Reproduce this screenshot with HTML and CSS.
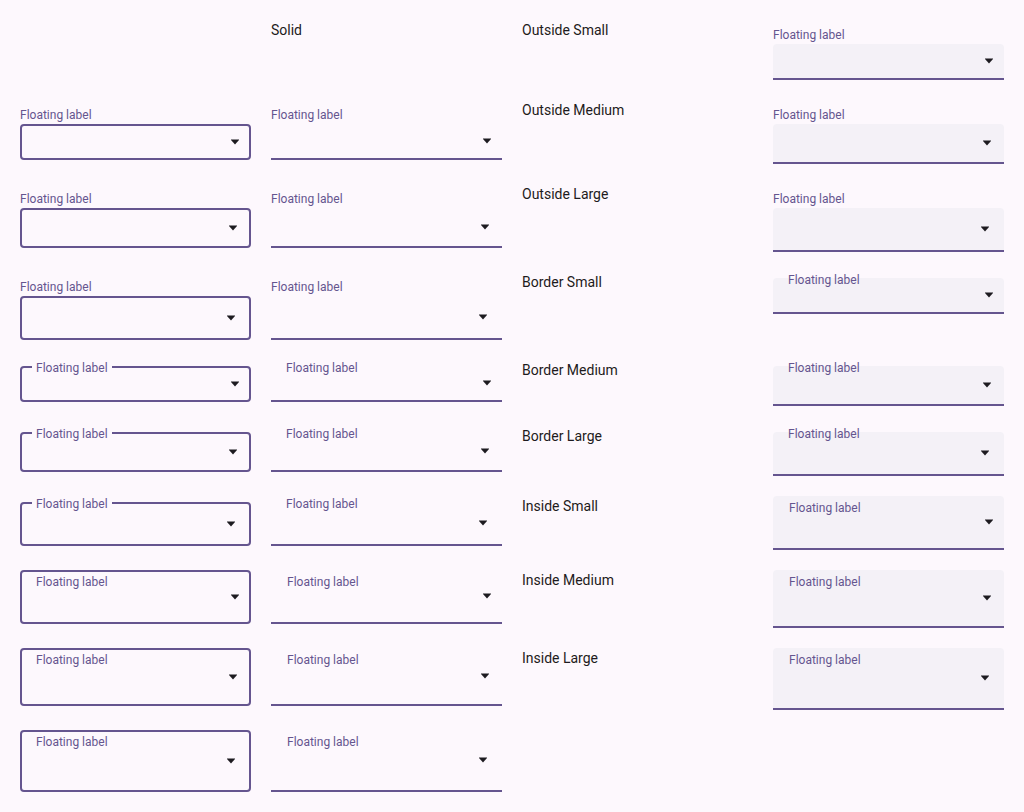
FILE: index.html
```html
<!DOCTYPE html>
<html lang="en">
<head>
<meta charset="utf-8">
<title>Select variants</title>
<link rel="stylesheet" href="styles.css">
</head>
<body>
<main class="grid">
  <!-- row 1 -->
  <div></div>
  <div class="heading">Solid</div>
  <div class="heading">Outside Small</div>
  <div class="field filled outside sm"><span class="label">Floating label</span><div class="box"><svg class="arrow" viewBox="0 0 8 6"><path d="M0 0.5h8v0.5L4 5.6 0 1z"/></svg></div></div>

  <!-- row 2 -->
  <div class="field outlined outside sm"><span class="label">Floating label</span><div class="box"><svg class="arrow" viewBox="0 0 8 6"><path d="M0 0.5h8v0.5L4 5.6 0 1z"/></svg></div></div>
  <div class="field solid outside sm"><span class="label">Floating label</span><div class="box"><svg class="arrow" viewBox="0 0 8 6"><path d="M0 0.5h8v0.5L4 5.6 0 1z"/></svg></div></div>
  <div class="heading">Outside Medium</div>
  <div class="field filled outside md"><span class="label">Floating label</span><div class="box"><svg class="arrow" viewBox="0 0 8 6"><path d="M0 0.5h8v0.5L4 5.6 0 1z"/></svg></div></div>

  <!-- row 3 -->
  <div class="field outlined outside md"><span class="label">Floating label</span><div class="box"><svg class="arrow" viewBox="0 0 8 6"><path d="M0 0.5h8v0.5L4 5.6 0 1z"/></svg></div></div>
  <div class="field solid outside md"><span class="label">Floating label</span><div class="box"><svg class="arrow" viewBox="0 0 8 6"><path d="M0 0.5h8v0.5L4 5.6 0 1z"/></svg></div></div>
  <div class="heading">Outside Large</div>
  <div class="field filled outside lg"><span class="label">Floating label</span><div class="box"><svg class="arrow" viewBox="0 0 8 6"><path d="M0 0.5h8v0.5L4 5.6 0 1z"/></svg></div></div>

  <!-- row 4 -->
  <div class="field outlined outside lg"><span class="label">Floating label</span><div class="box"><svg class="arrow" viewBox="0 0 8 6"><path d="M0 0.5h8v0.5L4 5.6 0 1z"/></svg></div></div>
  <div class="field solid outside lg"><span class="label">Floating label</span><div class="box"><svg class="arrow" viewBox="0 0 8 6"><path d="M0 0.5h8v0.5L4 5.6 0 1z"/></svg></div></div>
  <div class="heading">Border Small</div>
  <div class="field filled border sm"><span class="label">Floating label</span><div class="box"><svg class="arrow" viewBox="0 0 8 6"><path d="M0 0.5h8v0.5L4 5.6 0 1z"/></svg></div></div>

  <!-- row 5 -->
  <div class="field outlined border sm"><span class="label">Floating label</span><div class="box"><svg class="arrow" viewBox="0 0 8 6"><path d="M0 0.5h8v0.5L4 5.6 0 1z"/></svg></div></div>
  <div class="field solid border sm"><span class="label">Floating label</span><div class="box"><svg class="arrow" viewBox="0 0 8 6"><path d="M0 0.5h8v0.5L4 5.6 0 1z"/></svg></div></div>
  <div class="heading">Border Medium</div>
  <div class="field filled border md"><span class="label">Floating label</span><div class="box"><svg class="arrow" viewBox="0 0 8 6"><path d="M0 0.5h8v0.5L4 5.6 0 1z"/></svg></div></div>

  <!-- row 6 -->
  <div class="field outlined border md"><span class="label">Floating label</span><div class="box"><svg class="arrow" viewBox="0 0 8 6"><path d="M0 0.5h8v0.5L4 5.6 0 1z"/></svg></div></div>
  <div class="field solid border md"><span class="label">Floating label</span><div class="box"><svg class="arrow" viewBox="0 0 8 6"><path d="M0 0.5h8v0.5L4 5.6 0 1z"/></svg></div></div>
  <div class="heading">Border Large</div>
  <div class="field filled border lg"><span class="label">Floating label</span><div class="box"><svg class="arrow" viewBox="0 0 8 6"><path d="M0 0.5h8v0.5L4 5.6 0 1z"/></svg></div></div>

  <!-- row 7 -->
  <div class="field outlined border lg"><span class="label">Floating label</span><div class="box"><svg class="arrow" viewBox="0 0 8 6"><path d="M0 0.5h8v0.5L4 5.6 0 1z"/></svg></div></div>
  <div class="field solid border lg"><span class="label">Floating label</span><div class="box"><svg class="arrow" viewBox="0 0 8 6"><path d="M0 0.5h8v0.5L4 5.6 0 1z"/></svg></div></div>
  <div class="heading">Inside Small</div>
  <div class="field filled inside sm"><div class="box"><span class="label">Floating label</span><svg class="arrow" viewBox="0 0 8 6"><path d="M0 0.5h8v0.5L4 5.6 0 1z"/></svg></div></div>

  <!-- row 8 -->
  <div class="field outlined inside sm"><div class="box"><span class="label">Floating label</span><svg class="arrow" viewBox="0 0 8 6"><path d="M0 0.5h8v0.5L4 5.6 0 1z"/></svg></div></div>
  <div class="field solid inside sm"><div class="box"><span class="label">Floating label</span><svg class="arrow" viewBox="0 0 8 6"><path d="M0 0.5h8v0.5L4 5.6 0 1z"/></svg></div></div>
  <div class="heading">Inside Medium</div>
  <div class="field filled inside md"><div class="box"><span class="label">Floating label</span><svg class="arrow" viewBox="0 0 8 6"><path d="M0 0.5h8v0.5L4 5.6 0 1z"/></svg></div></div>

  <!-- row 9 -->
  <div class="field outlined inside md"><div class="box"><span class="label">Floating label</span><svg class="arrow" viewBox="0 0 8 6"><path d="M0 0.5h8v0.5L4 5.6 0 1z"/></svg></div></div>
  <div class="field solid inside md"><div class="box"><span class="label">Floating label</span><svg class="arrow" viewBox="0 0 8 6"><path d="M0 0.5h8v0.5L4 5.6 0 1z"/></svg></div></div>
  <div class="heading">Inside Large</div>
  <div class="field filled inside lg"><div class="box"><span class="label">Floating label</span><svg class="arrow" viewBox="0 0 8 6"><path d="M0 0.5h8v0.5L4 5.6 0 1z"/></svg></div></div>

  <!-- row 10 -->
  <div class="field outlined inside lg"><div class="box"><span class="label">Floating label</span><svg class="arrow" viewBox="0 0 8 6"><path d="M0 0.5h8v0.5L4 5.6 0 1z"/></svg></div></div>
  <div class="field solid inside lg"><div class="box"><span class="label">Floating label</span><svg class="arrow" viewBox="0 0 8 6"><path d="M0 0.5h8v0.5L4 5.6 0 1z"/></svg></div></div>
  <div></div>
  <div></div>
</main>
</body>
</html>
```

FILE: styles.css
```css
:root {
  --bg: #fdf8fd;
  --primary: #65558f;
  --on-surface: #1d1b20;
  --filled: #f4f1f7;
}

* {
  box-sizing: border-box;
}

html, body {
  margin: 0;
  background: var(--bg);
}

body {
  font-family: Roboto, "Noto Sans", "Liberation Sans", sans-serif;
  color: var(--on-surface);
  padding: 20px;
}

.grid {
  display: grid;
  grid-template-columns: repeat(4, 1fr);
  column-gap: 20px;
  row-gap: 20px;
  align-items: start;
}

.heading {
  font-size: 14px;
  line-height: 20px;
  color: var(--on-surface);
}

.field {
  display: flex;
  flex-direction: column;
}

.label {
  font-size: 12px;
  line-height: 16px;
  color: var(--primary);
  white-space: nowrap;
}

.box {
  display: flex;
  align-items: center;
  width: 100%;
}

.arrow {
  width: 8px;
  height: 6px;
  margin-left: auto;
  flex: none;
  fill: var(--on-surface);
}

/* containers */
.outlined .box {
  border: 2px solid var(--primary);
  border-radius: 4px;
}

.solid .box {
  border-bottom: 2px solid var(--primary);
}

.filled .box {
  background: var(--filled);
  border-bottom: 2px solid var(--primary);
  border-radius: 4px 4px 0 0;
}

/* sizes */
.sm .box { height: 36px; }
.md .box { height: 40px; }
.lg .box { height: 44px; }

.inside.sm .box { height: 54px; }
.inside.md .box { height: 58px; }
.inside.lg .box { height: 62px; }

.outlined.sm .box { padding-right: 10px; }
.outlined.md .box { padding-right: 12px; }
.outlined.lg .box { padding-right: 14px; }

.solid.sm .box, .filled.sm .box { padding-right: 11px; }
.solid.md .box, .filled.md .box { padding-right: 13px; }
.solid.lg .box, .filled.lg .box { padding-right: 15px; }

/* label placement: outside */
.outside .label {
  padding: 7px 0 1px;
}

/* label placement: on the border */
.border .label {
  align-self: flex-start;
  margin-bottom: -10px;
  position: relative;
  z-index: 1;
}

.outlined.border .label {
  margin-left: 12px;
  padding: 0 4px;
  background: var(--bg);
}

.solid.border .label,
.filled.border .label {
  margin-left: 15px;
}

/* label placement: inside */
.inside .box .label {
  align-self: flex-start;
}

.outlined.inside .box {
  padding-left: 14px;
}

.outlined.inside .label {
  margin-top: 2px;
}

.solid.inside .box,
.filled.inside .box {
  padding-left: 16px;
}

.solid.inside .label,
.filled.inside .label {
  margin-top: 4px;
}
```
